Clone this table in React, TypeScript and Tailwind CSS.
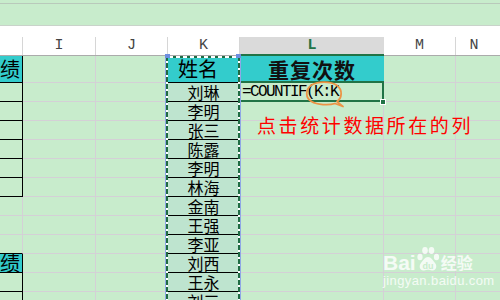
import React from "react";

const names = ["刘琳", "李明", "张三", "陈露", "李明", "林海", "金南", "王强", "李亚", "刘西", "王永", "刘三"];

// which rows of column H carry the black table border
const hBlack = (i: number) => i <= 6 || i >= 10;

function HeaderRow() {
  return (
    <div className="flex h-[19px] border-b border-[#ababab] bg-white font-['Liberation_Mono',monospace] text-[15px] leading-[18px] text-[#444]">
      <div className="w-[23px] shrink-0 border-r border-[#d6d6d6]" />
      <div className="flex w-[73px] shrink-0 justify-center border-r border-[#d6d6d6]">I</div>
      <div className="flex w-[72px] shrink-0 justify-center border-r border-[#d6d6d6]">J</div>
      <div className="flex w-[72px] shrink-0 justify-center border-r border-[#d6d6d6]">K</div>
      <div className="relative flex w-[144px] shrink-0 justify-center bg-[#dadada] font-bold text-[#217346]">
        L
        <div className="absolute bottom-[-1px] left-[-1px] right-0 h-[2px] bg-[#217346]" />
      </div>
      <div className="flex w-[72px] shrink-0 justify-center border-r border-[#d6d6d6]">M</div>
      <div className="flex flex-1 justify-center pr-[8px]">N</div>
    </div>
  );
}

function BodyRow({ i }: { i: number }) {
  const first = i === 0;
  const h = first ? "h-[27px]" : "h-[19px]";
  const cyanH = i === 0 || i === 10;
  let hCls = "border-b border-r border-[#d4d0d6]";
  if (hBlack(i)) hCls = "border-b border-r border-black";
  if (i === 9) hCls = "border-b border-r border-b-black border-r-[#d4d0d6]";

  return (
    <div className={`flex ${h}`}>
      <div
        className={`flex w-[23px] shrink-0 items-center justify-end whitespace-nowrap pr-[2px] text-[20px] leading-none text-black ${hCls} ${cyanH ? "bg-[#33cccc]" : ""}`}
      >
        {cyanH ? "绩" : ""}
      </div>
      <div className="w-[73px] shrink-0 border-b border-r border-[#d4d0d6]" />
      <div className="w-[72px] shrink-0 border-b border-r border-[#d4d0d6]" />
      {first ? (
        <div className="flex w-[72px] shrink-0 items-center justify-center border-b border-r border-b-black border-r-[#d4d0d6] bg-[#33cccc] pr-[11px] text-[20px] leading-none text-black">
          姓名
        </div>
      ) : (
        <div className="flex w-[72px] shrink-0 items-center justify-center border-b border-r border-b-black border-r-[#d4d0d6] bg-[#bee4cf] text-[16px] leading-[18px] text-black">
          {names[i - 1]}
        </div>
      )}
      {first ? (
        <div className="flex w-[144px] shrink-0 items-center justify-center bg-[#33cccc] text-[21px] font-bold leading-none tracking-[1px] text-[#111]">
          重复次数
        </div>
      ) : i === 1 ? (
        <div className="relative flex w-[144px] shrink-0 items-center border-b border-r border-[#d4d0d6] pl-[2px] font-['Liberation_Mono',monospace] text-[16px] tracking-[-1.6px] leading-none text-black">
          =COUNTIF(K:K
          <div className="absolute bottom-[-1px] left-[-2px] right-[-1px] top-[-2px] z-10 border-2 border-[#217346]" />
          <div className="absolute bottom-[-4px] right-[-3px] z-20 h-[6px] w-[6px] border border-white bg-[#217346]" />
        </div>
      ) : (
        <div className="w-[144px] shrink-0 border-b border-r border-[#d4d0d6]" />
      )}
      <div className="w-[72px] shrink-0 border-b border-r border-[#d4d0d6]" />
      <div className="flex-1 border-b border-[#d4d0d6]" />
    </div>
  );
}

function Paw() {
  return (
    <svg width="24" height="27" viewBox="0 0 24 27" className="shrink-0">
      <g fill="currentColor">
        <ellipse cx="4" cy="12" rx="2.6" ry="3.2" />
        <ellipse cx="9" cy="5.5" rx="2.8" ry="3.4" />
        <ellipse cx="15.5" cy="5.5" rx="2.8" ry="3.4" />
        <ellipse cx="20.5" cy="12" rx="2.6" ry="3.2" />
        <path d="M12 12c-3 0-5 3.5-7 6-2 2.4-2 7 2.5 7.5 1.8.2 3-.7 4.5-.7s2.7.9 4.5.7c4.5-.5 4.5-5.1 2.5-7.5-2-2.5-4-6-7-6z" />
      </g>
      <text x="12" y="23.5" textAnchor="middle" fontSize="9" fontWeight="bold" fill="#c8eccc" fontFamily="Liberation Sans, sans-serif">
        du
      </text>
    </svg>
  );
}

export default function App() {
  return (
    <div className="relative h-[300px] w-[500px] overflow-hidden bg-[#c8eccc] font-['Noto_Sans_CJK_SC',sans-serif]">
      <div className="h-[3px]" />
      <div className="h-[1px] bg-[#b9c9bb]" />
      <div className="h-[21px]" />
      <div className="h-[1px] bg-[#c9d3ca]" />
      <div className="h-[11px] bg-white" />
      <HeaderRow />
      <div className="relative">
        {Array.from({ length: 13 }).map((_, i) => (
          <BodyRow key={i} i={i} />
        ))}
        {/* marching ants around column K */}
        <div className="absolute bottom-0 left-[165px] top-0 z-10 w-[76px]">
          <div className="absolute bottom-0 left-0 top-0 w-[1px] bg-[#8fa8e6]" />
          <div className="absolute bottom-0 left-[1px] top-0 w-[2px] bg-[repeating-linear-gradient(to_bottom,#1f6b42_0_5px,#ffffff_5px_7px)]" />
          <div className="absolute bottom-0 right-[1px] top-0 w-[2px] bg-[repeating-linear-gradient(to_bottom,#1f6b42_0_5px,#ffffff_5px_7px)]" />
          <div className="absolute bottom-0 right-0 top-0 w-[1px] bg-[#8fa8e6]" />
          <div className="absolute left-[1px] right-[1px] top-0 h-[2px] bg-[repeating-linear-gradient(to_right,#1f6b42_0_3px,#ffffff_3px_7px)]" />
          <div className="absolute left-0 top-[-2px] h-[4px] w-[5px] bg-[#6d8ee0]" />
          <div className="absolute right-0 top-[-2px] h-[4px] w-[5px] bg-[#6d8ee0]" />
        </div>
      </div>

      {/* orange callout around the range reference */}
      <svg className="absolute left-[302px] top-[79px] z-20" width="46" height="30" viewBox="0 0 46 30">
        <path
          d="M35 22.5C40 19 41 11 35 6.5 29 2 15 2 9 6.5 3 11 3.5 19 9.5 22.5 15 26 27 26.5 33 24.5L41 27.5C38 25.5 36.5 24 35 22.5Z"
          fill="none"
          stroke="#ec9345"
          strokeWidth="1.8"
          strokeLinejoin="round"
        />
      </svg>

      <div className="absolute left-[257px] top-[115px] z-20 whitespace-nowrap text-[19px] leading-none tracking-[2.6px] text-[#ff0000]">
        点击统计数据所在的列
      </div>

      {/* watermark */}
      <div className="pointer-events-none absolute left-[383px] top-[245px] z-20 text-white/80">
        <div className="flex items-end">
          <span className="font-['Liberation_Sans',sans-serif] text-[21px] font-bold leading-[19px]">Bai</span>
          <Paw />
          <span className="ml-[1px] text-[16px] font-bold leading-[19px]">经验</span>
        </div>
        <div className="mt-[2px] font-['Liberation_Sans',sans-serif] text-[13px] leading-none tracking-[0.4px]">
          jingyan.baidu.com
        </div>
      </div>
    </div>
  );
}
